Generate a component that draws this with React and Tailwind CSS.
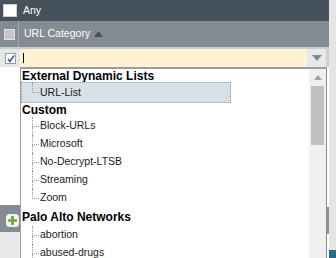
import React from "react";

function Conn({ last }) {
  return (
    <div className="flex w-[7px] shrink-0 flex-col self-stretch">
      <div className="flex-1 border-b border-l border-dotted border-[#9a9a9a]" />
      <div className={"flex-1 " + (last ? "" : "border-l border-dotted border-[#9a9a9a]")} />
    </div>
  );
}

function Item({ label, last, h }) {
  return (
    <div className={"flex shrink-0 items-stretch " + h}>
      <div className="w-[11px] shrink-0" />
      <Conn last={last} />
      <div className="flex items-center pl-[1px] text-[10.5px] text-[#1b1b1b]">{label}</div>
    </div>
  );
}

function Group({ label, h }) {
  return (
    <div className={"flex shrink-0 items-center pl-[1px] text-[12px] font-bold leading-none text-black " + h}>
      {label}
    </div>
  );
}

export default function App() {
  return (
    <div className="flex h-[258px] w-[336px] overflow-hidden bg-[#e5e5e5] font-['Liberation_Sans',Arial,sans-serif]">
      <div className="flex h-[258px] w-[329px] shrink-0 flex-col overflow-hidden">
        {/* top bar */}
        <div className="flex h-[21px] shrink-0 items-center bg-[#46525b] pl-[3px]">
          <div className="h-[13px] w-[14px] border border-[#d0d0d0] bg-white" />
          <span className="ml-[6px] text-[10.5px] text-white">Any</span>
        </div>
        {/* header */}
        <div className="flex h-[26px] shrink-0 bg-[#848b92]">
          <div className="flex w-[19px] items-center justify-center border-r border-[#a2a8ad]">
            <div className="h-[11px] w-[11px] border border-[#e2e2e2] bg-[#c6c6c6]" />
          </div>
          <div className="flex items-center pl-[5px]">
            <span className="text-[10.5px] text-white">URL Category</span>
            <svg className="ml-[4px]" width="9" height="6" viewBox="0 0 9 6">
              <path d="M0 6 L4.5 0 L9 6 Z" fill="#4b535a" />
            </svg>
          </div>
        </div>
        {/* input row */}
        <div className="flex h-[20px] shrink-0 border-t-2 border-[#c7cccf]">
          <div className="flex w-[20px] items-center justify-center bg-[#e6e6e6]">
            <div className="relative h-[11px] w-[11px] border border-[#9c9c9c] bg-white">
              <svg className="absolute left-[1px] top-[1px]" width="8" height="8" viewBox="0 0 8 8">
                <path d="M1 4 L3 6.5 L7 0.5" stroke="#2c4fa8" strokeWidth="1.4" fill="none" />
              </svg>
            </div>
          </div>
          <div className="flex flex-1 items-center bg-[#fff1d3] pl-[3px]">
            <div className="h-[10px] w-px bg-black" />
          </div>
          <div className="flex w-[20px] items-center justify-center border-l border-[#f4f4f4] bg-[#e8e8e8]">
            <svg width="10" height="6" viewBox="0 0 10 6">
              <path d="M0 0 L10 0 L5 6 Z" fill="#7b8c99" />
            </svg>
          </div>
          <div className="w-[3px] bg-[#c9d1d5]" />
        </div>
        {/* body */}
        <div className="flex min-h-0 flex-1 overflow-hidden">
          <div className="flex w-[20px] shrink-0 flex-col">
            <div className="h-[138px] shrink-0 bg-white" />
            <div className="flex h-[27px] shrink-0 items-start bg-[#848b92] pl-[6px] pt-[9px]">
              <div className="flex h-[13px] w-[13px] items-center justify-center rounded-[3px] border border-[#e8ecee] bg-[#f2f4f2]">
                <svg width="9" height="9" viewBox="0 0 9 9">
                  <path d="M3.2 0 H5.8 V3.2 H9 V5.8 H5.8 V9 H3.2 V5.8 H0 V3.2 H3.2 Z" fill="#6fa23a" />
                </svg>
              </div>
            </div>
            <div className="flex-1 bg-[#e8e8e8]" />
          </div>
          <div className="flex w-[307px] shrink-0 border-x border-t-2 border-l-[#a0a0a0] border-r-[#8c8c8c] border-t-[#9c9c9c] bg-white">
            <div className="flex min-h-0 flex-1 flex-col overflow-hidden">
              <Group label="External Dynamic Lists" h="h-[13px]" />
              <div className="flex h-[21px] shrink-0 items-stretch">
                <div className="flex w-[210px] items-stretch border border-dotted border-[#8e9aa3] bg-[#d6e0e6]">
                  <div className="w-[10px] shrink-0" />
                  <Conn last />
                  <div className="flex items-center pl-[1px] text-[10.5px] text-[#1b1b1b]">URL-List</div>
                </div>
              </div>
              <Group label="Custom" h="h-[14px]" />
              <Item label="Block-URLs" h="h-[18px]" />
              <Item label="Microsoft" h="h-[18px]" />
              <Item label="No-Decrypt-LTSB" h="h-[18px]" />
              <Item label="Streaming" h="h-[18px]" />
              <Item label="Zoom" last h="h-[18px]" />
              <Group label="Palo Alto Networks" h="h-[19px]" />
              <Item label="abortion" h="h-[18px]" />
              <Item label="abused-drugs" h="h-[18px]" />
            </div>
            <div className="flex w-[17px] shrink-0 flex-col items-center bg-[#f0f0f0]">
              <svg className="mt-[6px]" width="8" height="5" viewBox="0 0 8 5">
                <path d="M0 5 L4 0 L8 5 Z" fill="#a3a3a3" />
              </svg>
              <div className="mt-[6px] h-[59px] w-[13px] bg-[#c1c1c1]" />
            </div>
          </div>
          <div className="flex w-[2px] shrink-0 flex-col bg-white">
            <div className="h-[140px] shrink-0" />
            <div className="h-[27px] shrink-0 bg-[#8d959c]" />
          </div>
        </div>
      </div>
      <div className="flex flex-1 flex-col">
        <div className="flex-1" />
        <div className="h-[8px] bg-[#2b6889]" />
      </div>
    </div>
  );
}
